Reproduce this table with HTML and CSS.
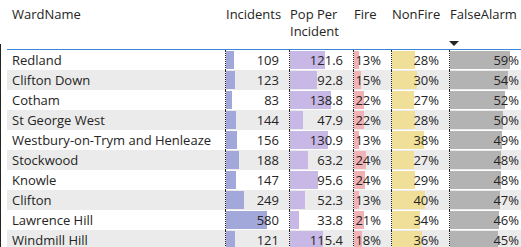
FILE: index.html
```html
<!DOCTYPE html>
<html>
<head>
<meta charset="utf-8">
<link rel="stylesheet" href="styles.css">
</head>
<body>
<div class="frame">
  <div class="table">
    <div class="head">
      <div class="hc ward">WardName</div>
      <div class="hc">Incidents</div>
      <div class="hc">Pop Per Incident</div>
      <div class="hc">Fire</div>
      <div class="hc">NonFire</div>
      <div class="hc sorted">FalseAlarm<span class="arrow"></span></div>
    </div>
    <div class="row">
      <div class="c ward">Redland</div>
      <div class="c num"><span class="b inc" style="width:7.7px"></span><span class="v">109</span></div>
      <div class="c num"><span class="b pop" style="width:35px"></span><span class="v">121.6</span></div>
      <div class="c num"><span class="b fire" style="width:5px"></span><span class="v">13%</span></div>
      <div class="c num"><span class="b non" style="width:23px"></span><span class="v">28%</span></div>
      <div class="c num"><span class="b fa" style="width:60px"></span><span class="v">59%</span></div>
    </div>
    <div class="row">
      <div class="c ward">Clifton Down</div>
      <div class="c num"><span class="b inc" style="width:8.7px"></span><span class="v">123</span></div>
      <div class="c num"><span class="b pop" style="width:27px"></span><span class="v">92.8</span></div>
      <div class="c num"><span class="b fire" style="width:7px"></span><span class="v">15%</span></div>
      <div class="c num"><span class="b non" style="width:25px"></span><span class="v">30%</span></div>
      <div class="c num"><span class="b fa" style="width:58px"></span><span class="v">54%</span></div>
    </div>
    <div class="row">
      <div class="c ward">Cotham</div>
      <div class="c num"><span class="b inc" style="width:5.9px"></span><span class="v">83</span></div>
      <div class="c num"><span class="b pop" style="width:41px"></span><span class="v">138.8</span></div>
      <div class="c num"><span class="b fire" style="width:10px"></span><span class="v">22%</span></div>
      <div class="c num"><span class="b non" style="width:22px"></span><span class="v">27%</span></div>
      <div class="c num"><span class="b fa" style="width:55px"></span><span class="v">52%</span></div>
    </div>
    <div class="row">
      <div class="c ward">St George West</div>
      <div class="c num"><span class="b inc" style="width:10.2px"></span><span class="v">144</span></div>
      <div class="c num"><span class="b pop" style="width:13px"></span><span class="v">47.9</span></div>
      <div class="c num"><span class="b fire" style="width:10px"></span><span class="v">22%</span></div>
      <div class="c num"><span class="b non" style="width:23px"></span><span class="v">28%</span></div>
      <div class="c num"><span class="b fa" style="width:53px"></span><span class="v">50%</span></div>
    </div>
    <div class="row">
      <div class="c ward">Westbury-on-Trym and Henleaze</div>
      <div class="c num"><span class="b inc" style="width:11px"></span><span class="v">156</span></div>
      <div class="c num"><span class="b pop" style="width:38px"></span><span class="v">130.9</span></div>
      <div class="c num"><span class="b fire" style="width:5px"></span><span class="v">13%</span></div>
      <div class="c num"><span class="b non" style="width:32px"></span><span class="v">38%</span></div>
      <div class="c num"><span class="b fa" style="width:52px"></span><span class="v">49%</span></div>
    </div>
    <div class="row">
      <div class="c ward">Stockwood</div>
      <div class="c num"><span class="b inc" style="width:13.3px"></span><span class="v">188</span></div>
      <div class="c num"><span class="b pop" style="width:18px"></span><span class="v">63.2</span></div>
      <div class="c num"><span class="b fire" style="width:12px"></span><span class="v">24%</span></div>
      <div class="c num"><span class="b non" style="width:22px"></span><span class="v">27%</span></div>
      <div class="c num"><span class="b fa" style="width:51px"></span><span class="v">48%</span></div>
    </div>
    <div class="row">
      <div class="c ward">Knowle</div>
      <div class="c num"><span class="b inc" style="width:10.4px"></span><span class="v">147</span></div>
      <div class="c num"><span class="b pop" style="width:28px"></span><span class="v">95.6</span></div>
      <div class="c num"><span class="b fire" style="width:11px"></span><span class="v">24%</span></div>
      <div class="c num"><span class="b non" style="width:23px"></span><span class="v">29%</span></div>
      <div class="c num"><span class="b fa" style="width:51px"></span><span class="v">48%</span></div>
    </div>
    <div class="row">
      <div class="c ward">Clifton</div>
      <div class="c num"><span class="b inc" style="width:17.6px"></span><span class="v">249</span></div>
      <div class="c num"><span class="b pop" style="width:15px"></span><span class="v">52.3</span></div>
      <div class="c num"><span class="b fire" style="width:5px"></span><span class="v">13%</span></div>
      <div class="c num"><span class="b non" style="width:33px"></span><span class="v">40%</span></div>
      <div class="c num"><span class="b fa" style="width:50px"></span><span class="v">47%</span></div>
    </div>
    <div class="row">
      <div class="c ward">Lawrence Hill</div>
      <div class="c num"><span class="b inc" style="width:41px"></span><span class="v">580</span></div>
      <div class="c num"><span class="b pop" style="width:9px"></span><span class="v">33.8</span></div>
      <div class="c num"><span class="b fire" style="width:10px"></span><span class="v">21%</span></div>
      <div class="c num"><span class="b non" style="width:28px"></span><span class="v">34%</span></div>
      <div class="c num"><span class="b fa" style="width:49px"></span><span class="v">46%</span></div>
    </div>
    <div class="row">
      <div class="c ward">Windmill Hill</div>
      <div class="c num"><span class="b inc" style="width:8.6px"></span><span class="v">121</span></div>
      <div class="c num"><span class="b pop" style="width:33px"></span><span class="v">115.4</span></div>
      <div class="c num"><span class="b fire" style="width:8px"></span><span class="v">18%</span></div>
      <div class="c num"><span class="b non" style="width:30px"></span><span class="v">36%</span></div>
      <div class="c num"><span class="b fa" style="width:48px"></span><span class="v">45%</span></div>
    </div>
  </div>
</div>
</body>
</html>
```

FILE: styles.css
```css
html, body {
  margin: 0;
  padding: 0;
  background: #ffffff;
  overflow: hidden;
}
body {
  width: 521px;
  height: 247px;
  font-family: "Open Sans", "Noto Sans", sans-serif;
  font-size: 13px;
  color: #252423;
}
.frame {
  height: 247px;
  padding-left: 7px;
  position: relative;
}
.frame::before {
  content: "";
  position: absolute;
  left: 0;
  top: 44px;
  bottom: 0;
  width: 1px;
  background: #252423;
}
.table {
  display: grid;
  grid-template-columns: 218px 64px 64px 38px 58px 80px;
}
.head, .row {
  display: contents;
}
.hc {
  border-bottom: 1px solid #3a87d6;
  padding-top: 6px;
  line-height: 16.5px;
  box-sizing: border-box;
  height: 50px;
  padding-left: 1px;
  padding-right: 4px;
  position: relative;
}
.hc.ward {
  padding-left: 5px;
}
.arrow {
  position: absolute;
  left: 0;
  top: 41px;
  width: 0;
  height: 0;
  border-left: 5px solid transparent;
  border-right: 5px solid transparent;
  border-top: 5px solid #252423;
}
.c {
  height: 20px;
  line-height: 20px;
  white-space: nowrap;
  box-sizing: border-box;
}
.c.ward {
  padding-left: 5px;
}
.row:nth-child(odd) .c {
  background: #ebebeb;
}
.num {
  position: relative;
  text-align: right;
  padding-right: 10px;
  border-left: 1px dotted #252423;
}
.b {
  position: absolute;
  left: 0;
  top: 1px;
  bottom: 1px;
}
.v {
  position: relative;
}
.b.inc { background: #a3a8db; }
.b.pop { background: #c8b8e6; }
.b.fire { background: #f1b2b6; }
.b.non { background: #f0df98; }
.b.fa { background: #b3b3b3; }
```
